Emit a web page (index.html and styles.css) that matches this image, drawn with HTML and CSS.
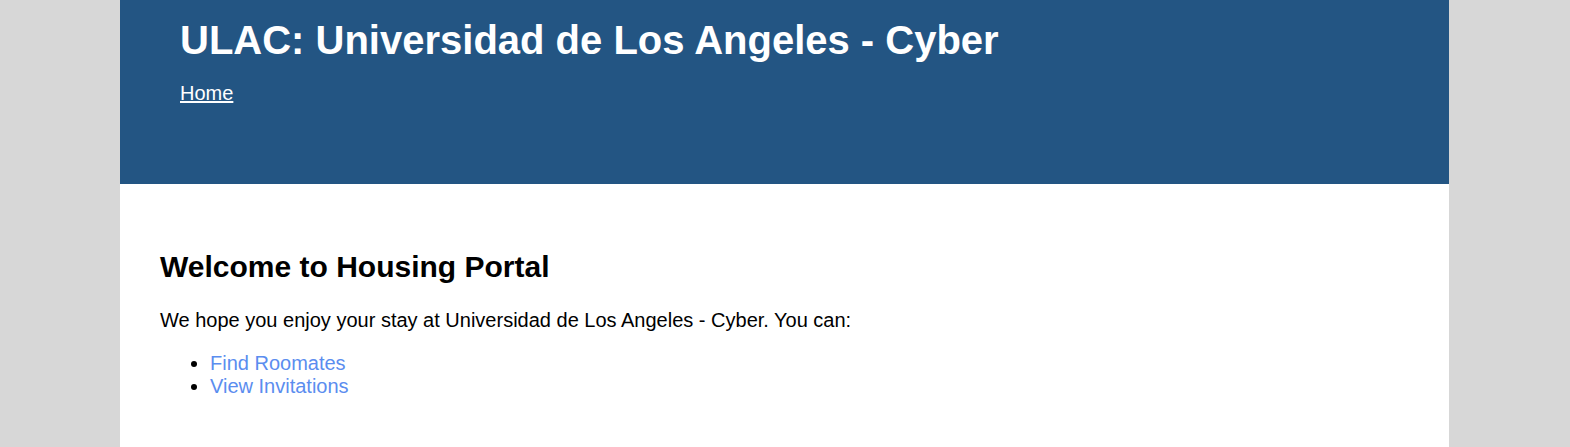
FILE: index.html
```html
<!DOCTYPE html>
<html lang="en">
<head>
<meta charset="utf-8">
<title>ULAC Housing Portal</title>
<link rel="stylesheet" href="styles.css">
</head>
<body>
<div class="page">
  <header class="site-header">
    <h1 class="site-title">ULAC: Universidad de Los Angeles - Cyber</h1>
    <nav class="site-nav"><a href="#" class="nav-link">Home</a></nav>
  </header>
  <main class="content">
    <h2 class="content-title">Welcome to Housing Portal</h2>
    <p class="content-text">We hope you enjoy your stay at Universidad de Los Angeles - Cyber. You can:</p>
    <ul class="action-list">
      <li><a href="#" class="action-link">Find Roomates</a></li>
      <li><a href="#" class="action-link">View Invitations</a></li>
    </ul>
  </main>
</div>
</body>
</html>
```
FILE: styles.css
```css
html, body {
  margin: 0;
  padding: 0;
}
body {
  padding-right: 1px;
  background: #d7d7d7;
  font-family: "Liberation Sans", Arial, sans-serif;
  font-size: 20px;
  color: #000;
}
.page {
  width: 1329px;
  margin: 0 auto;
  min-height: 100vh;
  background: #fff;
}
.site-header {
  box-sizing: border-box;
  height: 184px;
  padding: 18px 60px 0;
  background: #235583;
  color: #fff;
}
.site-title {
  margin: 0;
  font-size: 40px;
  font-weight: bold;
  line-height: normal;
}
.site-nav {
  margin-top: 19px;
  font-size: 20px;
}
.nav-link {
  color: #fff;
  text-decoration: underline;
}
.content {
  padding: 0 40px 20px;
  overflow: hidden;
}
.content-title {
  margin: 66px 0 25px;
  font-size: 30px;
  font-weight: bold;
  line-height: normal;
}
.content-text {
  margin: 0 0 20px;
  line-height: normal;
}
.action-list {
  margin: 0;
  padding-left: 50px;
  line-height: normal;
}
.action-link {
  color: #5b8def;
  text-decoration: none;
}
```
